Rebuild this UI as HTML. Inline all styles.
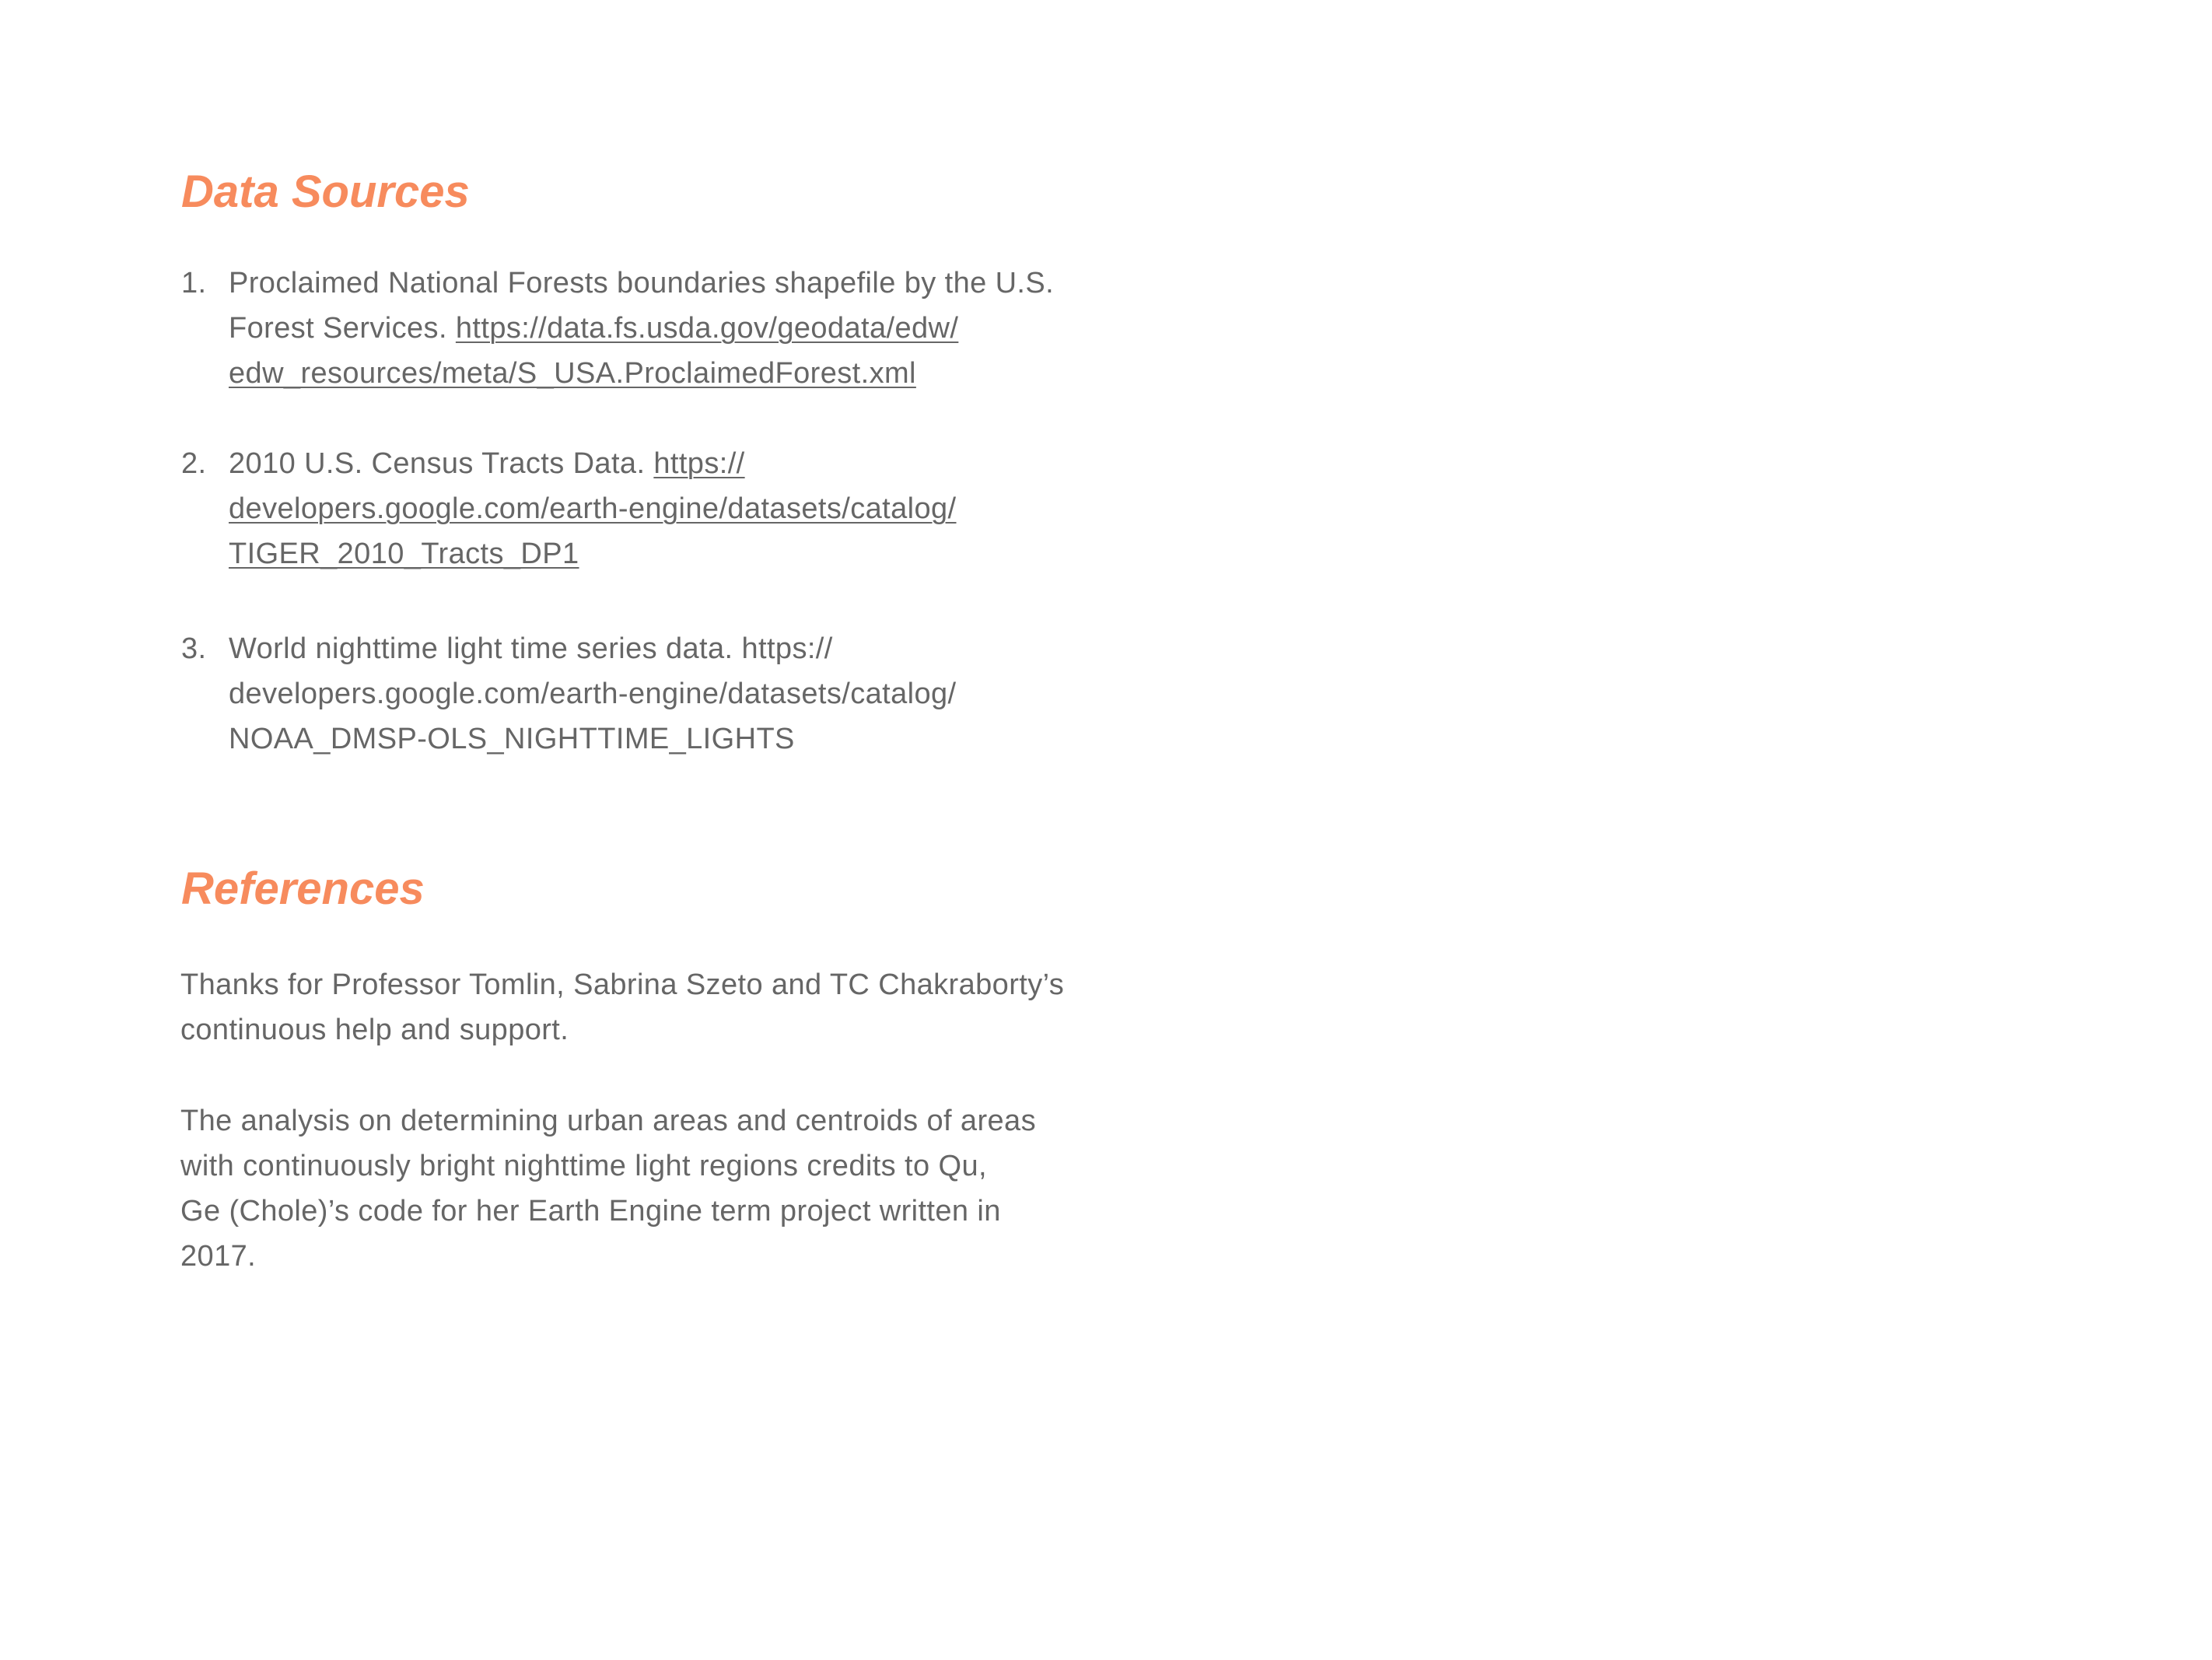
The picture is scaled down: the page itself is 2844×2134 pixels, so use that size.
<!DOCTYPE html>
<html><head><meta charset="utf-8"><style>
html,body{margin:0;padding:0;background:#fff;}
body{width:2844px;height:2134px;position:relative;overflow:hidden;font-family:"Liberation Sans",sans-serif;}
.h{position:absolute;left:233px;font-size:58px;line-height:70px;font-weight:bold;font-style:italic;color:#F78B5D;white-space:nowrap;}
.l{position:absolute;font-size:38px;line-height:58px;color:#666;white-space:nowrap;letter-spacing:0.4px;}
.u{text-decoration:underline;text-decoration-thickness:2px;text-underline-offset:5px;}
</style></head><body>
<div class="h" style="top:212px">Data Sources</div>

<div class="l" style="left:233px;top:335px">1.</div>
<div class="l" style="left:294px;top:335px">Proclaimed National Forests boundaries shapefile by the U.S.</div>
<div class="l" style="left:294px;top:393px">Forest Services. <span class="u">https://data.fs.usda.gov/geodata/edw/</span></div>
<div class="l" style="left:294px;top:451px"><span class="u">edw_resources/meta/S_USA.ProclaimedForest.xml</span></div>

<div class="l" style="left:233px;top:567px">2.</div>
<div class="l" style="left:294px;top:567px">2010 U.S. Census Tracts Data. <span class="u">https://</span></div>
<div class="l" style="left:294px;top:625px"><span class="u">developers.google.com/earth-engine/datasets/catalog/</span></div>
<div class="l" style="left:294px;top:683px"><span class="u">TIGER_2010_Tracts_DP1</span></div>

<div class="l" style="left:233px;top:805px">3.</div>
<div class="l" style="left:294px;top:805px">World nighttime light time series data. https://</div>
<div class="l" style="left:294px;top:863px">developers.google.com/earth-engine/datasets/catalog/</div>
<div class="l" style="left:294px;top:921px">NOAA_DMSP-OLS_NIGHTTIME_LIGHTS</div>

<div class="h" style="top:1108px">References</div>

<div class="l" style="left:232px;top:1237px">Thanks for Professor Tomlin, Sabrina Szeto and TC Chakraborty’s</div>
<div class="l" style="left:232px;top:1295px">continuous help and support.</div>

<div class="l" style="left:232px;top:1412px">The analysis on determining urban areas and centroids of areas</div>
<div class="l" style="left:232px;top:1470px">with continuously bright nighttime light regions credits to Qu,</div>
<div class="l" style="left:232px;top:1528px">Ge (Chole)’s code for her Earth Engine term project written in</div>
<div class="l" style="left:232px;top:1586px">2017.</div>
</body></html>
